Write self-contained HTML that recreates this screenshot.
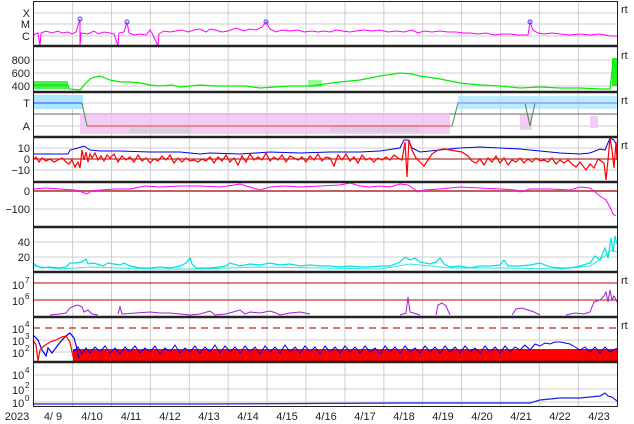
<!DOCTYPE html>
<html><head><meta charset="utf-8"><style>
html,body{margin:0;padding:0;background:#fff}
svg{display:block}
text{font-family:"Liberation Sans",sans-serif;font-size:11px;fill:#222}
.g{stroke:#cfcfcf;stroke-width:1}
.rt{font-size:8px}
</style></head><body>
<svg width="634" height="424" viewBox="0 0 634 424" xmlns="http://www.w3.org/2000/svg">
<rect width="634" height="424" fill="#fff"/>
<g class="g">
<line x1="72.6" y1="1" x2="72.6" y2="406"/><line x1="111.5" y1="1" x2="111.5" y2="406"/><line x1="150.4" y1="1" x2="150.4" y2="406"/><line x1="189.3" y1="1" x2="189.3" y2="406"/><line x1="228.2" y1="1" x2="228.2" y2="406"/><line x1="267.1" y1="1" x2="267.1" y2="406"/><line x1="306" y1="1" x2="306" y2="406"/><line x1="344.9" y1="1" x2="344.9" y2="406"/><line x1="383.8" y1="1" x2="383.8" y2="406"/><line x1="422.7" y1="1" x2="422.7" y2="406"/><line x1="461.6" y1="1" x2="461.6" y2="406"/><line x1="500.5" y1="1" x2="500.5" y2="406"/><line x1="539.4" y1="1" x2="539.4" y2="406"/><line x1="578.3" y1="1" x2="578.3" y2="406"/>
<line x1="33" y1="13" x2="617" y2="13"/><line x1="33" y1="24" x2="617" y2="24"/><line x1="33" y1="36" x2="617" y2="36"/>
<line x1="33" y1="60" x2="617" y2="60"/><line x1="33" y1="73" x2="617" y2="73"/><line x1="33" y1="86" x2="617" y2="86"/>
<line x1="33" y1="103" x2="617" y2="103"/><line x1="33" y1="126" x2="617" y2="126"/>
<line x1="33" y1="148" x2="617" y2="148"/><line x1="33" y1="170" x2="617" y2="170"/>
<line x1="33" y1="209" x2="617" y2="209"/>
<line x1="33" y1="242" x2="617" y2="242"/><line x1="33" y1="257" x2="617" y2="257"/>
<line x1="33" y1="340" x2="617" y2="340"/><line x1="33" y1="352" x2="617" y2="352"/>
<line x1="33" y1="375" x2="617" y2="375"/><line x1="33" y1="389" x2="617" y2="389"/><line x1="33" y1="402" x2="617" y2="402"/>
</g>

<polyline fill="none" stroke="#ff00ff" stroke-width="1" points="33,35 38,33 40,46 41,33 46,31 52,33 58,31 62,33 68,32 72,34 76,32 80,19 80,46 81,33 88,34 94,31 98,34 104,32 110,33 114,34 118,46 119,33 124,32 127,22 129,33 134,35 140,34 146,35 150,30 152,33 158,46 159,34 164,31 170,32 176,31 182,30 188,32 194,30 200,29 206,32 210,29 215,30 222,32 228,31 236,28 244,31 250,29 256,30 262,27 266,22 270,29 276,32 282,30 290,31 298,30 304,32 312,31 318,32 324,31 330,32 336,30 342,31 350,32 356,31 364,30 372,31 380,30 388,32 396,31 404,32 412,30 418,33 424,31 432,32 440,31 448,32 456,32 464,33 470,33 478,34 486,33 494,35 502,34 510,34 518,35 524,35 528,35 530,22 533,30 538,33 544,34 552,33 560,34 570,35 580,34 590,35 600,34 610,36 617,36"/>
<g fill="none" stroke="#4040ff" stroke-width="1"><circle cx="80" cy="19" r="2"/><circle cx="127" cy="22" r="2"/><circle cx="266" cy="22" r="2"/><circle cx="530" cy="22" r="2"/></g>

<rect x="33" y="81" width="35" height="8" fill="#00ee00" opacity=".7"/>
<rect x="308" y="80" width="14" height="7" fill="#00ee00" opacity=".4"/>
<rect x="612" y="58" width="5" height="28" fill="#00ee00" opacity=".85"/>
<polyline fill="none" stroke="#00ee00" stroke-width="1.2" points="33,85 68,85 69,89 80,90 85,84 90,79 95,77 100,76 105,78 110,80 115,81 120,82 130,82 140,83 150,85 160,86 172,85 180,87 190,86 200,85 215,86 230,86 245,86 260,88 275,87 290,86 310,86 325,84 340,82 360,80 380,76 400,73 412,74 420,76 440,79 460,83 480,85 500,86 520,88 540,87 560,88 580,88 600,89 610,89 613,62 617,70"/>

<line x1="33" y1="114" x2="617" y2="114" stroke="#666" stroke-width="1"/>
<rect x="33" y="95" width="50" height="14" fill="#aee6ff"/>
<rect x="80" y="113" width="370" height="21" fill="#f3bff3" opacity=".8"/>
<rect x="130" y="127" width="60" height="6" fill="#ccc" opacity=".6"/>
<rect x="330" y="125" width="90" height="7" fill="#ccc" opacity=".5"/>
<rect x="458" y="96" width="159" height="13" fill="#aee6ff" opacity=".8"/>
<rect x="520" y="115" width="12" height="15" fill="#f3bff3" opacity=".8"/>
<rect x="590" y="116" width="8" height="12" fill="#f3bff3" opacity=".8"/>
<polyline fill="none" stroke="#4466ff" stroke-width="1.2" points="33,103 82,103"/>
<polyline fill="none" stroke="#4a8a4a" stroke-width="1" points="82,103 87,126"/>
<line x1="87" y1="126" x2="452" y2="126" stroke="#e04040" stroke-width="1"/>
<polyline fill="none" stroke="#4a8a4a" stroke-width="1" points="452,126 458,103 525,103 530,126 535,103"/>
<line x1="458" y1="103" x2="617" y2="103" stroke="#8090ff" stroke-width="1.2"/>

<line x1="33" y1="159" x2="617" y2="159" stroke="#a00000" stroke-width="1"/>
<polyline fill="none" stroke="#0000ee" stroke-width="1" points="33,154 68,154 70,150 78,148 84,146 90,150 100,151 120,151 150,152 180,152 200,154 210,153 240,154 270,152 300,153 330,152 360,152 380,151 400,148 404,140 408,140 412,148 420,152 440,150 460,148 480,147 500,148 520,149 540,151 560,153 580,154 590,153 600,149 605,150 610,138 614,140 617,146"/>
<polyline fill="none" stroke="#ff0000" stroke-width="1.2" points="33,160 36,157 39,162 42,158 46,161 50,159 54,162 58,160 62,158 66,162 69,164 72,160 75,167 78,162 80,168 82,150 84,160 86,152 88,162 90,154 92,158 95,153 98,160 101,156 104,161 107,155 110,158 114,154 118,162 122,156 126,160 130,157 134,162 138,155 142,161 146,158 150,163 154,159 158,161 162,156 166,160 170,155 174,163 178,158 182,162 186,158 190,161 194,160 198,162 202,159 206,161 210,157 214,163 218,157 222,161 226,155 230,162 234,158 238,165 242,156 246,162 250,154 254,160 258,157 262,160 266,153 270,161 274,157 278,160 282,155 286,162 290,156 294,158 298,160 302,157 306,162 310,156 314,160 318,154 322,161 326,157 330,158 334,166 338,155 342,160 346,154 350,161 354,157 358,163 362,155 366,160 370,158 374,162 378,158 382,160 386,157 390,160 394,155 398,158 402,160 405,142 407,177 409,140 412,150 416,158 420,162 424,166 428,160 432,154 438,150 444,149 450,150 456,151 462,152 468,156 472,161 476,163 480,159 484,165 488,158 492,162 496,156 500,163 504,158 508,165 512,160 516,162 520,158 524,163 528,159 532,162 536,158 540,161 544,160 548,162 552,158 556,164 560,160 564,163 568,160 572,164 576,167 580,162 586,170 590,164 594,168 598,159 604,163 606,180 608,160 610,138 612,150 614,168 616,142 617,160"/>

<line x1="33" y1="191" x2="617" y2="191" stroke="#c06060" stroke-width="2"/>
<polyline fill="none" stroke="#ff00ff" stroke-width="1" points="33,189 45,188 60,189 75,190 82,192 87,194 92,191 100,190 115,189 130,189 145,186 160,187 180,186 200,186 220,187 234,185 240,184 250,187 260,190 270,187 285,186 300,187 320,186 340,185 350,183 360,186 370,187 380,186 390,187 400,184 408,185 414,189 418,192 424,190 440,189 460,187 480,188 500,189 516,190 520,192 530,189 550,189 570,190 580,187 590,188 600,196 606,200 610,207 613,214 616,216"/>

<polyline fill="none" stroke="#00e0e0" stroke-width="1.2" points="33,263 37,266 42,268 50,267 58,268 66,267 70,263 76,263 82,262 86,259 88,264 93,263 97,264 103,266 108,263 114,264 120,265 124,263 130,266 140,268 150,268 160,267 170,268 180,266 186,263 190,258 192,264 196,268 210,268 220,267 226,266 230,263 240,266 250,264 260,265 270,263 280,265 290,264 300,266 310,265 320,266 330,266 340,267 350,266 360,267 370,267 380,266 390,266 400,262 405,257 410,260 415,258 420,262 430,264 436,262 440,258 444,264 450,267 460,266 470,268 480,266 490,266 500,265 504,260 508,266 520,266 530,265 540,263 550,267 560,268 570,268 580,266 590,263 595,256 600,260 605,248 608,258 611,238 613,252 615,236 617,244"/>
<polyline fill="none" stroke="#00e0e0" stroke-width="1" opacity=".8" points="33,266 60,269 90,267 120,268 160,269 200,269 260,267 320,268 380,269 410,264 450,268 500,268 560,269 590,266 605,256 612,250 617,252"/>

<line x1="33" y1="283" x2="617" y2="283" stroke="#cc0000" stroke-width="1"/>
<line x1="33" y1="300" x2="617" y2="300" stroke="#cc0000" stroke-width="1"/>
<polyline fill="none" stroke="#a020d0" stroke-width="1" points="50,315 60,314 66,313 70,308 74,306 78,305 82,307 84,312 88,310 92,314 98,315"/>
<polyline fill="none" stroke="#a020d0" stroke-width="1" points="118,314 120,307 122,314 150,312 160,313 170,313 190,315 200,314 210,311 215,315 226,314 240,310 245,314 250,312 260,313 270,311 276,313 280,315 290,313 300,312 310,314"/>
<polyline fill="none" stroke="#a020d0" stroke-width="1" points="400,315 406,313 408,297 410,312 420,315"/>
<polyline fill="none" stroke="#a020d0" stroke-width="1" points="436,315 438,305 442,303 446,306 450,315"/>
<polyline fill="none" stroke="#a020d0" stroke-width="1" points="512,315 516,309 522,308 528,310 534,312 540,315"/>
<polyline fill="none" stroke="#a020d0" stroke-width="1" points="566,315 575,313 584,314 590,312 594,302 600,300 604,296 606,292 608,302 610,290 612,300 614,296 617,302"/>

<line x1="33" y1="328" x2="617" y2="328" stroke="#cc2020" stroke-width="1.2" stroke-dasharray="7,5"/>
<rect x="73" y="349" width="544" height="13" fill="#ff0000"/>
<polyline fill="none" stroke="#0000ee" stroke-width="1" points="73,352 78,347 82,354 86,348 90,353 95,347 100,352 105,346 110,353 115,348 120,354 125,347 130,352 135,346 140,353 145,348 150,352 155,346 160,354 165,348 170,352 175,345 180,353 185,348 190,352 195,346 200,353 205,347 210,352 215,345 220,353 225,346 230,352 235,347 240,353 245,346 250,352 255,347 260,354 265,346 270,352 275,347 280,353 285,345 290,352 295,347 300,353 305,346 310,352 315,347 320,354 325,346 330,352 335,347 340,353 345,346 350,352 355,347 360,353 365,346 370,352 375,348 380,354 385,346 390,352 395,347 400,353 405,346 410,352 415,348 420,353 425,346 430,352 435,347 440,353 445,346 450,352 455,347 460,353 465,346 470,352 475,348 480,353 485,346 490,352 495,347 500,353 505,346 510,352 515,347 520,350 525,345 530,350 535,344 540,346 545,343 550,344 555,342 560,342 565,343 570,344 575,347 580,350 585,347 590,352 595,347 600,353 605,347 610,352 617,348"/>
<polyline fill="none" stroke="#0000ee" stroke-width="1.2" points="33,335 38,340 42,350 46,356 48,348 52,353 58,345 62,340 66,336 70,333 74,338 76,345 79,358"/>
<polyline fill="none" stroke="#ff0000" stroke-width="1.2" points="33,340 36,345 38,361 40,350 44,346 50,342 56,340 62,337 66,336 70,342 72,352 74,360"/>

<polyline fill="none" stroke="#2020e0" stroke-width="1.2" points="33,404 200,404 400,403 530,403 540,400 560,398 580,398 600,396 605,393 608,396 612,397 617,401"/>

<g stroke="#222" stroke-width="2.4">
<line x1="33" y1="46" x2="618" y2="46"/><line x1="33" y1="92" x2="618" y2="92"/><line x1="33" y1="137" x2="618" y2="137"/><line x1="33" y1="182" x2="618" y2="182"/><line x1="33" y1="227" x2="618" y2="227"/><line x1="33" y1="272" x2="618" y2="272"/><line x1="33" y1="317" x2="618" y2="317"/><line x1="33" y1="362" x2="618" y2="362"/>
</g>
<rect x="33.5" y="1.5" width="584" height="405" fill="none" stroke="#222" stroke-width="1"/>

<g text-anchor="end">
<text x="30" y="17">X</text><text x="30" y="28">M</text><text x="30" y="40">C</text>
<text x="30" y="64">800</text><text x="30" y="77">600</text><text x="30" y="90">400</text>
<text x="30" y="107">T</text><text x="30" y="130">A</text>
<text x="30" y="152">10</text><text x="30" y="163">0</text><text x="30" y="174">−10</text>
<text x="30" y="195">0</text><text x="30" y="213">−100</text>
<text x="30" y="246">40</text><text x="30" y="261">20</text>
</g>
<text x="12" y="289">10</text><text x="25" y="283" style="font-size:8px">7</text>
<text x="12" y="305">10</text><text x="25" y="299" style="font-size:8px">6</text>
<text x="12" y="333">10</text><text x="25" y="327" style="font-size:8px">4</text>
<text x="12" y="345">10</text><text x="25" y="339" style="font-size:8px">3</text>
<text x="12" y="357">10</text><text x="25" y="351" style="font-size:8px">2</text>
<text x="12" y="379">10</text><text x="25" y="373" style="font-size:8px">4</text>
<text x="12" y="394">10</text><text x="25" y="388" style="font-size:8px">2</text>
<text x="12" y="407">10</text><text x="25" y="401" style="font-size:8px">0</text>
<g class="rt"><text x="621" y="13">rt</text><text x="621" y="59">rt</text><text x="621" y="104">rt</text><text x="621" y="149">rt</text><text x="621" y="284">rt</text><text x="621" y="329">rt</text></g>
<g text-anchor="middle">
<text x="17" y="420">2023</text><text x="53" y="420">4/ 9</text><text x="92" y="420">4/10</text><text x="131" y="420">4/11</text><text x="170" y="420">4/12</text><text x="209" y="420">4/13</text><text x="248" y="420">4/14</text><text x="287" y="420">4/15</text><text x="326" y="420">4/16</text><text x="365" y="420">4/17</text><text x="404" y="420">4/18</text><text x="443" y="420">4/19</text><text x="482" y="420">4/20</text><text x="521" y="420">4/21</text><text x="560" y="420">4/22</text><text x="599" y="420">4/23</text>
</g>
</svg>
</body></html>
